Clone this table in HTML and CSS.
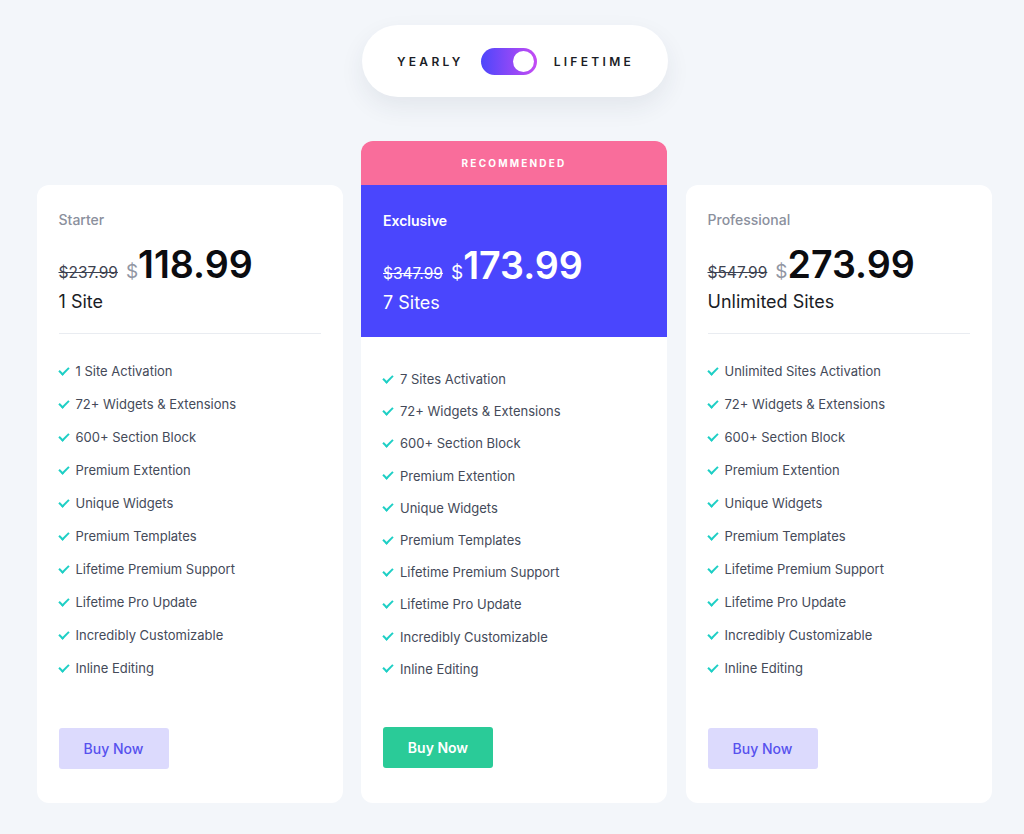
FILE: index.html
```html
<!DOCTYPE html>
<html>
<head>
  <title>Pricing</title>
  <link rel="stylesheet" href="styles.css">
</head>
<body>
  <!-- Plan period switch -->
  <div class="switch-wrap">
    <div class="period-switch">
      <span class="period">Yearly</span>
      <span class="toggle"><span class="knob"></span></span>
      <span class="period">Lifetime</span>
    </div>
  </div>

  <!-- Pricing cards -->
  <div class="plans">
    <div class="card">
      <div class="card-head">
        <div class="plan-name">Starter</div>
        <div class="price-row">
          <span class="old-price">$237.99</span>
          <span class="currency">$</span><span class="amount">118.99</span>
        </div>
        <div class="sites">1 Site</div>
      </div>
      <ul class="features">
        <li>1 Site Activation</li>
        <li>72+ Widgets &amp; Extensions</li>
        <li>600+ Section Block</li>
        <li>Premium Extention</li>
        <li>Unique Widgets</li>
        <li>Premium Templates</li>
        <li>Lifetime Premium Support</li>
        <li>Lifetime Pro Update</li>
        <li>Incredibly Customizable</li>
        <li>Inline Editing</li>
      </ul>
      <button class="buy-btn">Buy Now</button>
    </div>

    <div class="card featured">
      <div class="badge">Recommended</div>
      <div class="card-head">
        <div class="plan-name">Exclusive</div>
        <div class="price-row">
          <span class="old-price">$347.99</span>
          <span class="currency">$</span><span class="amount">173.99</span>
        </div>
        <div class="sites">7 Sites</div>
      </div>
      <ul class="features">
        <li>7 Sites Activation</li>
        <li>72+ Widgets &amp; Extensions</li>
        <li>600+ Section Block</li>
        <li>Premium Extention</li>
        <li>Unique Widgets</li>
        <li>Premium Templates</li>
        <li>Lifetime Premium Support</li>
        <li>Lifetime Pro Update</li>
        <li>Incredibly Customizable</li>
        <li>Inline Editing</li>
      </ul>
      <button class="buy-btn">Buy Now</button>
    </div>

    <div class="card">
      <div class="card-head">
        <div class="plan-name">Professional</div>
        <div class="price-row">
          <span class="old-price">$547.99</span>
          <span class="currency">$</span><span class="amount">273.99</span>
        </div>
        <div class="sites">Unlimited Sites</div>
      </div>
      <ul class="features">
        <li>Unlimited Sites Activation</li>
        <li>72+ Widgets &amp; Extensions</li>
        <li>600+ Section Block</li>
        <li>Premium Extention</li>
        <li>Unique Widgets</li>
        <li>Premium Templates</li>
        <li>Lifetime Premium Support</li>
        <li>Lifetime Pro Update</li>
        <li>Incredibly Customizable</li>
        <li>Inline Editing</li>
      </ul>
      <button class="buy-btn">Buy Now</button>
    </div>
  </div>
</body>
</html>
```

FILE: styles.css
```css
body {
  margin: 0;
  background-color: #f3f6fa;
  font-family: Inter, "Noto Sans", sans-serif;
  color: #1b1d26;
}
.switch-wrap {
  display: flex;
  justify-content: center;
  padding-top: 25px;
  padding-left: 5px;
}
.period-switch {
  width: 306px;
  height: 72px;
  border-radius: 36px;
  background: #fff;
  box-shadow: 0 10px 25px rgba(40, 50, 80, 0.08);
  display: flex;
  align-items: center;
  justify-content: center;
  gap: 17px;
  padding-left: 2px;
  box-sizing: border-box;
}
.period {
  font-size: 12px;
  font-weight: 600;
  letter-spacing: 3.3px;
  text-transform: uppercase;
  color: #1b1d26;
}
.toggle {
  width: 56px;
  height: 27px;
  border-radius: 14px;
  background: linear-gradient(90deg, #4d46fb, #c54bf4);
  display: flex;
  align-items: center;
  justify-content: flex-end;
  padding-right: 3px;
  box-sizing: border-box;
}
.knob {
  width: 21px;
  height: 21px;
  border-radius: 50%;
  background: #fff;
}
.plans {
  display: grid;
  grid-template-columns: repeat(3, 306px);
  column-gap: 18.5px;
  align-items: end;
  padding-left: 36.5px;
  margin-top: 44px;
}
.card {
  background: #fff;
  border-radius: 12px;
  padding: 0 22px 34px;
  display: flex;
  flex-direction: column;
  align-items: flex-start;
}
.card-head {
  align-self: stretch;
  padding-top: 25px;
  padding-bottom: 18px;
  border-bottom: 1px solid #e9ecf1;
}
.plan-name {
  font-size: 14px;
  line-height: 20px;
  font-weight: 500;
  color: #8b909d;
}
.price-row {
  margin-top: 13px;
  display: flex;
  align-items: baseline;
  height: 44px;
}
.old-price {
  font-size: 15.5px;
  color: #3d4250;
  text-decoration: line-through;
  margin-right: 8px;
}
.currency {
  font-size: 19px;
  color: #9196a3;
  margin-right: 0;
}
.amount {
  font-size: 37.6px;
  line-height: 44px;
  font-weight: 600;
  color: #0b0c10;
}
.sites {
  margin-top: 2px;
  font-size: 18px;
  line-height: 26px;
  color: #1b1d26;
}
.features {
  list-style: none;
  margin: 21px 0 0;
  padding: 0;
}
.features li {
  height: 33px;
  line-height: 33px;
  font-size: 13px;
  color: #444a59;
  display: flex;
  align-items: center;
}
.features li::before {
  content: "";
  width: 8px;
  height: 4px;
  border-left: 2px solid #1ecfc5;
  border-bottom: 2px solid #1ecfc5;
  transform: rotate(-45deg);
  margin: -3px 7px 0 0;
}
.buy-btn {
  margin-top: 43px;
  width: 110px;
  height: 41px;
  border: none;
  border-radius: 3px;
  background: #dcdafd;
  color: #5751ee;
  font-family: Inter, "Noto Sans", sans-serif;
  font-size: 14px;
  font-weight: 500;
}

/* featured middle card */
.featured {
  overflow: hidden;
  padding-left: 0;
  padding-right: 0;
  padding-bottom: 35px;
}
.badge {
  align-self: stretch;
  height: 44px;
  line-height: 44px;
  background: #f96d9b;
  color: #fff;
  text-align: center;
  font-size: 10px;
  font-weight: 700;
  letter-spacing: 2.2px;
  text-transform: uppercase;
}
.featured .card-head {
  background: #4a46fd;
  padding: 26px 22px 21px;
  border-bottom: none;
}
.featured .plan-name {
  color: #fff;
  font-weight: 600;
}
.featured .old-price,
.featured .currency,
.featured .amount,
.featured .sites {
  color: #fff;
}
.featured .features {
  margin: 26px 22px 0;
}
.featured .features li {
  height: 32.2px;
  line-height: 32.2px;
}
.featured .buy-btn {
  margin-left: 22px;
  margin-top: 42px;
  background: #2acb98;
  color: #fff;
  font-weight: 600;
}
```
